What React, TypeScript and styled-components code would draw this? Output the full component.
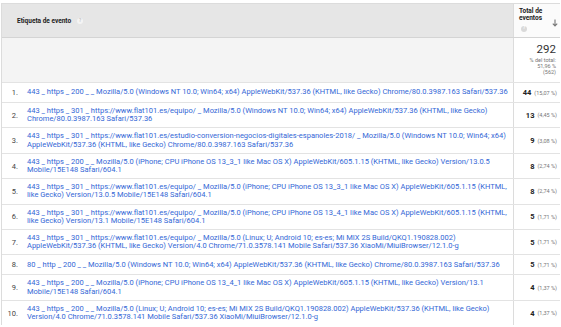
import React from "react";
import styled, { createGlobalStyle } from "styled-components";

const GlobalStyle = createGlobalStyle`
  body {
    margin: 0;
    background: #ffffff;
    font-family: Roboto, "Liberation Sans", sans-serif;
  }
`;

type EventRow = {
  label: string;
  total: number;
  share: string;
};

const rows: EventRow[] = [
  {
    label:
      "443 _ https _ 200 _ _ Mozilla/5.0 (Windows NT 10.0; Win64; x64) AppleWebKit/537.36 (KHTML, like Gecko) Chrome/80.0.3987.163 Safari/537.36",
    total: 44,
    share: "(15,07 %)",
  },
  {
    label:
      "443 _ https _ 301 _ https://www.flat101.es/equipo/ _ Mozilla/5.0 (Windows NT 10.0; Win64; x64) AppleWebKit/537.36 (KHTML, like Gecko)\nChrome/80.0.3987.163 Safari/537.36",
    total: 13,
    share: "(4,45 %)",
  },
  {
    label:
      "443 _ https _ 301 _ https://www.flat101.es/estudio-conversion-negocios-digitales-espanoles-2018/ _ Mozilla/5.0 (Windows NT 10.0; Win64; x64)\nAppleWebKit/537.36 (KHTML, like Gecko) Chrome/80.0.3987.163 Safari/537.36",
    total: 9,
    share: "(3,08 %)",
  },
  {
    label:
      "443 _ https _ 200 _ _ Mozilla/5.0 (iPhone; CPU iPhone OS 13_3_1 like Mac OS X) AppleWebKit/605.1.15 (KHTML, like Gecko) Version/13.0.5\nMobile/15E148 Safari/604.1",
    total: 8,
    share: "(2,74 %)",
  },
  {
    label:
      "443 _ https _ 301 _ https://www.flat101.es/equipo/ _ Mozilla/5.0 (iPhone; CPU iPhone OS 13_3_1 like Mac OS X) AppleWebKit/605.1.15 (KHTML,\nlike Gecko) Version/13.0.5 Mobile/15E148 Safari/604.1",
    total: 8,
    share: "(2,74 %)",
  },
  {
    label:
      "443 _ https _ 301 _ https://www.flat101.es/equipo/ _ Mozilla/5.0 (iPhone; CPU iPhone OS 13_4_1 like Mac OS X) AppleWebKit/605.1.15 (KHTML,\nlike Gecko) Version/13.1 Mobile/15E148 Safari/604.1",
    total: 5,
    share: "(1,71 %)",
  },
  {
    label:
      "443 _ https _ 301 _ https://www.flat101.es/equipo/ _ Mozilla/5.0 (Linux; U; Android 10; es-es; Mi MIX 2S Build/QKQ1.190828.002)\nAppleWebKit/537.36 (KHTML, like Gecko) Version/4.0 Chrome/71.0.3578.141 Mobile Safari/537.36 XiaoMi/MiuiBrowser/12.1.0-g",
    total: 5,
    share: "(1,71 %)",
  },
  {
    label:
      "80 _ http _ 200 _ _ Mozilla/5.0 (Windows NT 10.0; Win64; x64) AppleWebKit/537.36 (KHTML, like Gecko) Chrome/80.0.3987.163 Safari/537.36",
    total: 5,
    share: "(1,71 %)",
  },
  {
    label:
      "443 _ https _ 200 _ _ Mozilla/5.0 (iPhone; CPU iPhone OS 13_4_1 like Mac OS X) AppleWebKit/605.1.15 (KHTML, like Gecko) Version/13.1\nMobile/15E148 Safari/604.1",
    total: 4,
    share: "(1,37 %)",
  },
  {
    label:
      "443 _ https _ 200 _ _ Mozilla/5.0 (Linux; U; Android 10; es-es; Mi MIX 2S Build/QKQ1.190828.002) AppleWebKit/537.36 (KHTML, like Gecko)\nVersion/4.0 Chrome/71.0.3578.141 Mobile Safari/537.36 XiaoMi/MiuiBrowser/12.1.0-g",
    total: 4,
    share: "(1,37 %)",
  },
];

const Table = styled.div`
  margin: 3px 0 0 1px;
  width: 559px;
  box-sizing: border-box;
  border-top: 1px solid #dcdcdc;
  border-left: 1px solid #dcdcdc;
`;

const HeaderRow = styled.div`
  display: grid;
  grid-template-columns: 511px 47px;
  height: 34px;
  box-sizing: border-box;
  border-bottom: 1px solid #d4d4d4;
`;

const HeaderLabel = styled.div`
  display: flex;
  align-items: center;
  gap: 6px;
  padding: 1px 0 0 15px;
  background: #e6e6e6;
  font-size: 6.5px;
  font-weight: 700;
  color: #222;
`;

const MetricHeader = styled.div`
  display: flex;
  justify-content: space-between;
  padding: 4px 2px 0 5px;
  border-left: 1px solid #dcdcdc;
  background: #fbfbfb;
`;

const MetricTitle = styled.div`
  display: flex;
  flex-direction: column;
  align-items: flex-start;
  font-size: 6.5px;
  line-height: 7.3px;
  font-weight: 700;
  color: #222;
`;

const Help = styled.span<{ $muted?: boolean }>`
  display: inline-flex;
  align-items: center;
  justify-content: center;
  width: 6px;
  height: 6px;
  margin-top: ${(p) => (p.$muted ? "0" : "3px")};
  margin-left: ${(p) => (p.$muted ? "0" : "2px")};
  border-radius: 50%;
  background: ${(p) => (p.$muted ? "#f4f4f4" : "#d9d9d9")};
  color: ${(p) => (p.$muted ? "#c4c4c4" : "#ffffff")};
  font-size: 4.5px;
  font-weight: 700;
  line-height: 1;
`;

const SortArrow = styled.svg`
  align-self: center;
  margin-top: 1px;
`;

const SummaryRow = styled.div`
  display: grid;
  grid-template-columns: 511px 47px;
  height: 44px;
`;

const SummaryBlank = styled.div`
  background: #f4f4f4;
`;

const SummaryTotal = styled.div`
  display: flex;
  flex-direction: column;
  align-items: flex-end;
  padding: 5px 4px 0 0;
  border-left: 1px solid #dcdcdc;
  background: #ffffff;
`;

const BigNumber = styled.div`
  font-size: 11.5px;
  line-height: 12px;
  color: #333;
  margin-bottom: 2px;
`;

const SmallNote = styled.div`
  font-size: 5.5px;
  line-height: 6px;
  color: #777;
  text-align: right;
`;

const DataRow = styled.div`
  display: grid;
  grid-template-columns: 25px 486px 47px;
  min-height: 20px;
  box-sizing: border-box;
  border-top: 1px solid #e3e3e3;
  align-items: center;
`;

const Index = styled.div`
  padding-right: 9px;
  text-align: right;
  font-size: 7.5px;
  color: #444;
`;

const Label = styled.div`
  padding: 4px 2px 4px 0;
  font-size: 7.53px;
  line-height: 8.2px;
  color: #3367d6;
  white-space: pre-line;
`;

const CountCell = styled.div`
  align-self: stretch;
  display: flex;
  align-items: center;
  justify-content: flex-end;
  gap: 3px;
  padding-right: 3px;
  border-left: 1px solid #dcdcdc;
`;

const Count = styled.span`
  font-size: 7.5px;
  font-weight: 700;
  color: #222;
`;

const Share = styled.span`
  font-size: 5.5px;
  color: #777;
`;

function App() {
  return (
    <>
      <GlobalStyle />
      <Table>
        <HeaderRow>
          <HeaderLabel>
            Etiqueta de evento
            <Help $muted>?</Help>
          </HeaderLabel>
          <MetricHeader>
            <MetricTitle>
              <span>Total de</span>
              <span>eventos</span>
              <Help>?</Help>
            </MetricTitle>
            <SortArrow width="6" height="8" viewBox="0 0 6 8">
              <path d="M3 0.5V6.8M0.8 4.6L3 6.9L5.2 4.6" fill="none" stroke="#777" strokeWidth="1.1" />
            </SortArrow>
          </MetricHeader>
        </HeaderRow>

        <SummaryRow>
          <SummaryBlank />
          <SummaryTotal>
            <BigNumber>292</BigNumber>
            <SmallNote>% del total:</SmallNote>
            <SmallNote>51,96 %</SmallNote>
            <SmallNote>(562)</SmallNote>
          </SummaryTotal>
        </SummaryRow>

        {rows.map((row, i) => (
          <DataRow key={i}>
            <Index>{i + 1}.</Index>
            <Label>{row.label}</Label>
            <CountCell>
              <Count>{row.total}</Count>
              <Share>{row.share}</Share>
            </CountCell>
          </DataRow>
        ))}
      </Table>
    </>
  );
}

export default App;
